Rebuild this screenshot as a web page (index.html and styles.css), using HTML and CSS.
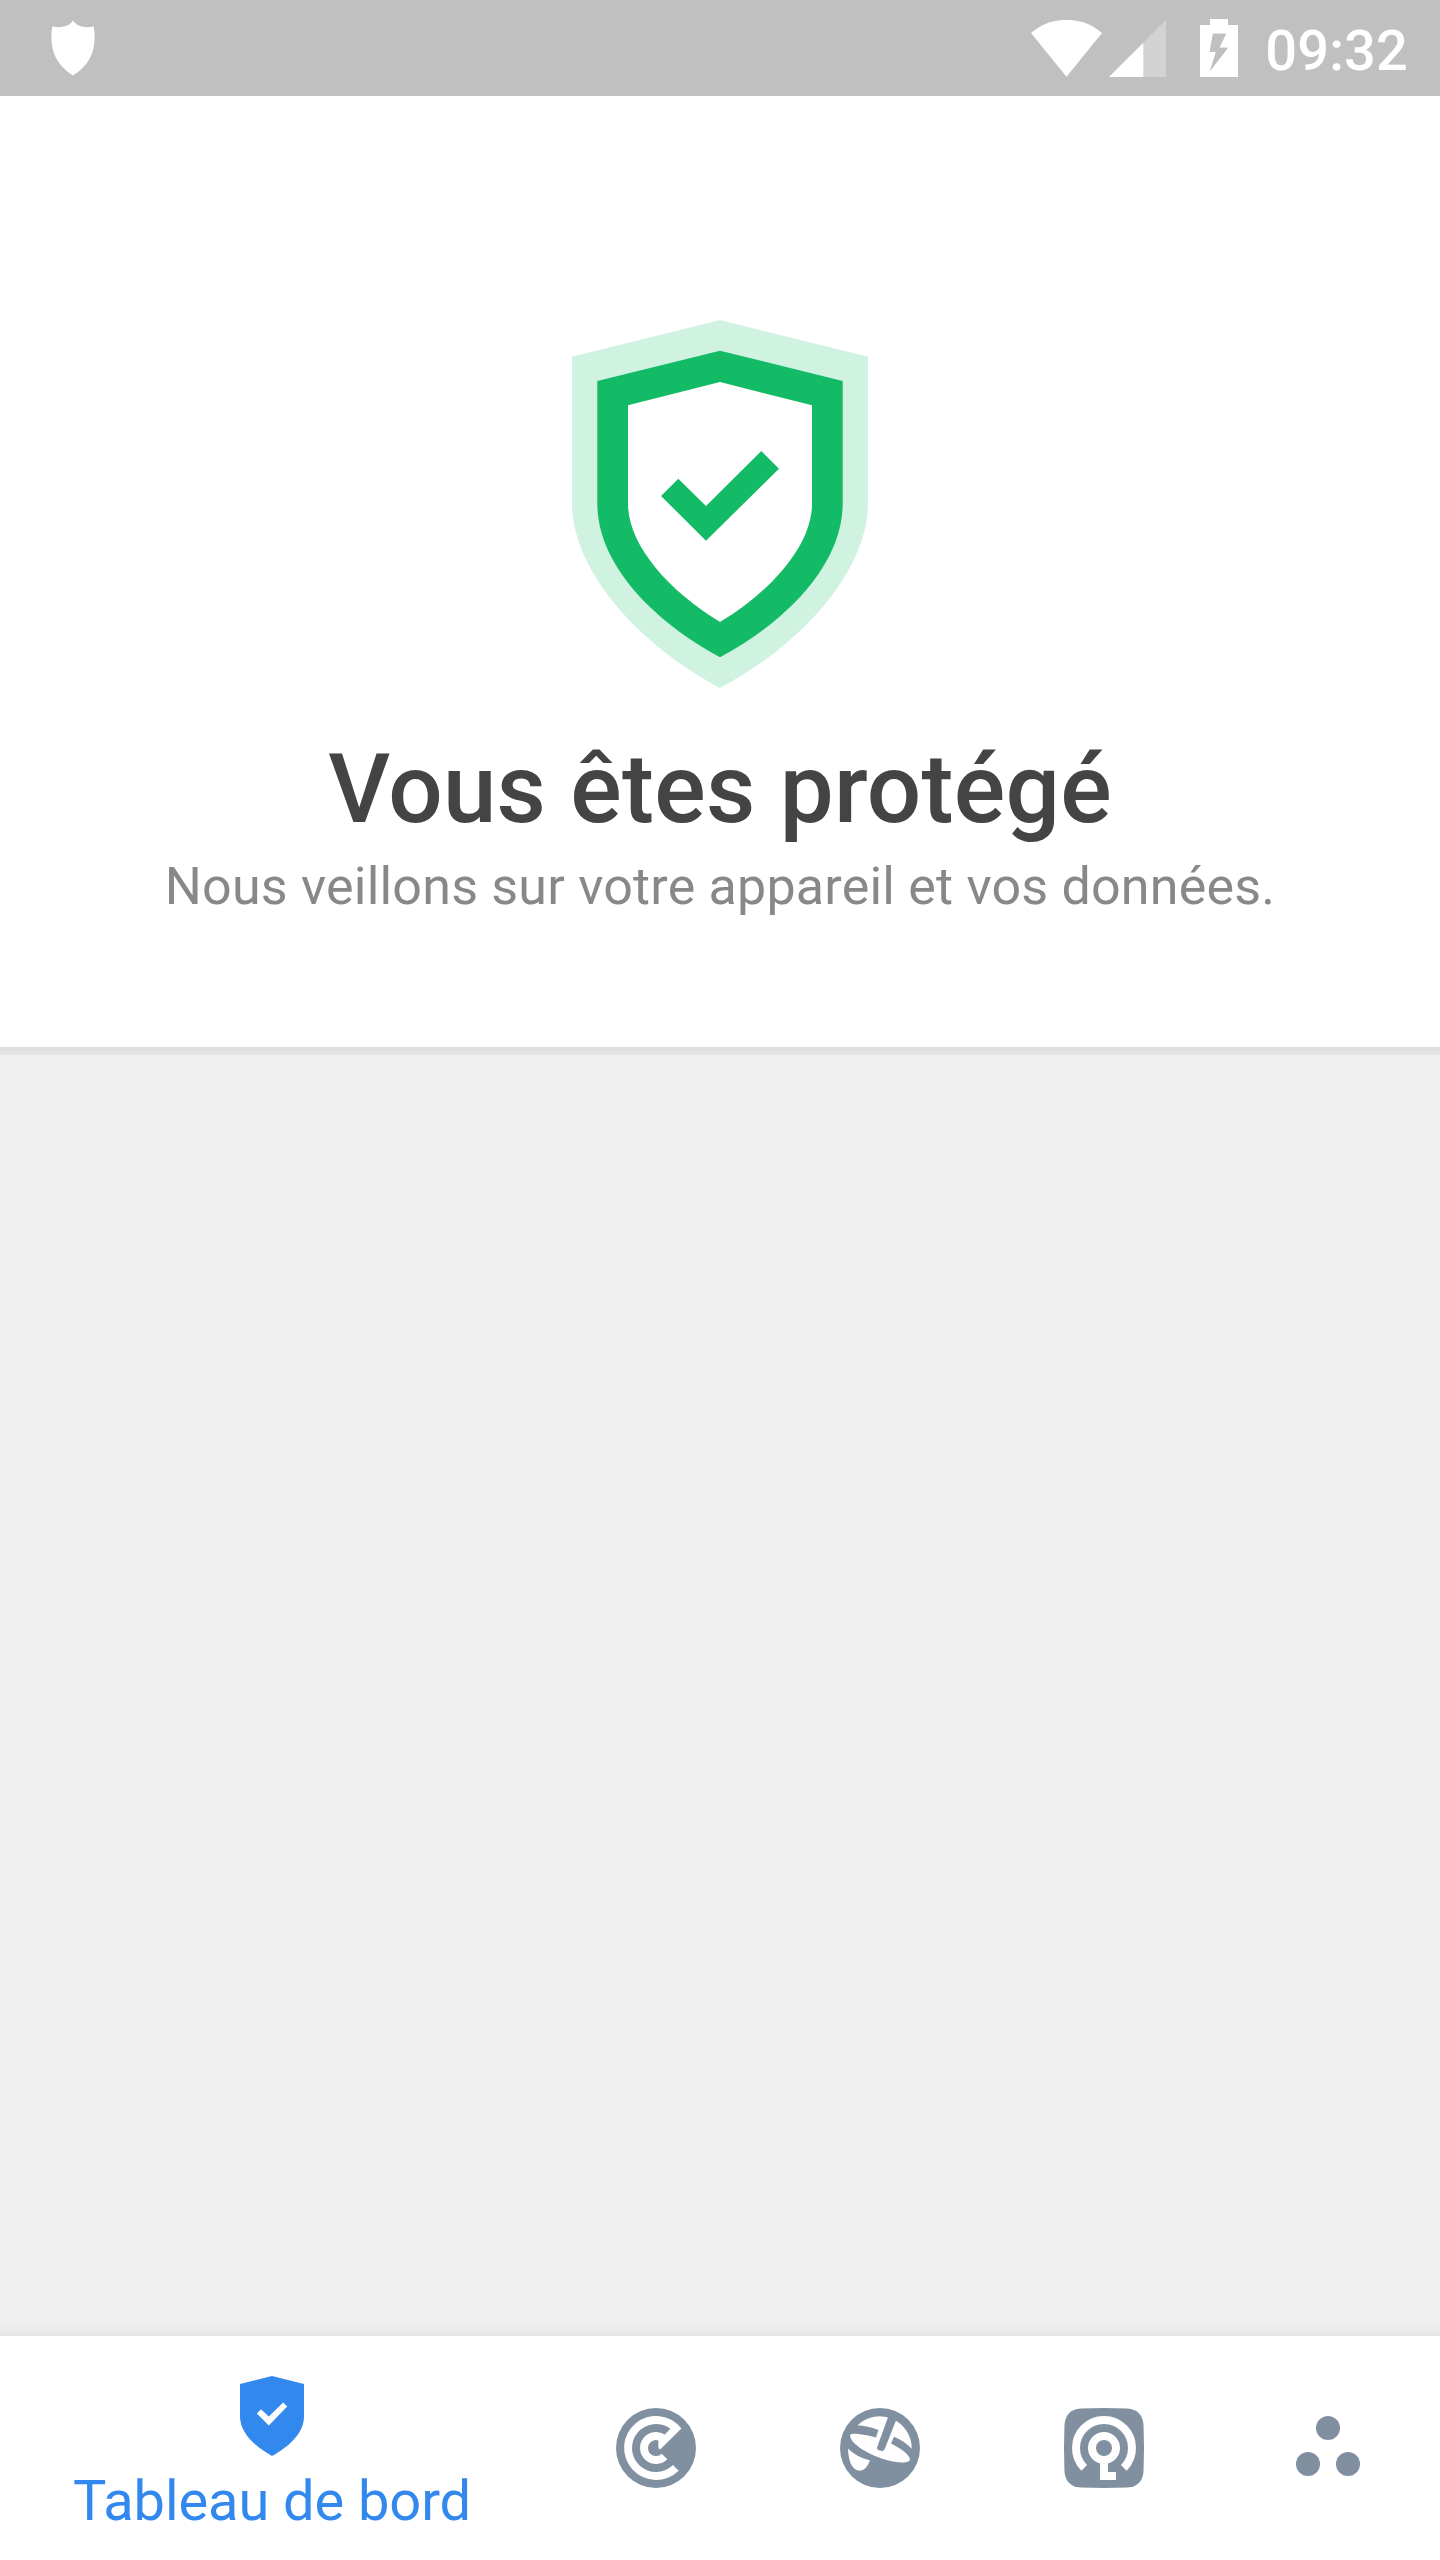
FILE: index.html
```html
<!DOCTYPE html>
<html lang="fr">
<head>
<meta charset="utf-8">
<title>Tableau de bord</title>
<link rel="stylesheet" href="styles.css">
</head>
<body>
<div class="screen">
  <header class="status-bar">
    <svg class="status-shield" width="44" height="56" viewBox="0 0 44 56"><path d="M22 .6C25.500 5.500 31 8.500 42.800 6.500C45.800 27 41 43.500 22 55.400C3 43.500-1.800 27 1.200 6.500C13 8.500 18.500 5.500 22 .6Z"/></svg>
    <div class="status-icons">
      <svg class="wifi" width="71" height="57" viewBox="0 0 71 57"><path d="M0 13C20-4.500 51-4.500 71 13L35.500 56.700Z"/></svg>
      <svg class="signal" width="57" height="57" viewBox="0 0 57 57"><path class="faint" d="M57 0V57H0Z"/><path d="M34.300 22.700V57H0Z"/></svg>
      <svg class="battery" width="38" height="58" viewBox="0 0 38 58"><path fill-rule="evenodd" d="M10 0H28V6H38V58H0V6H10ZM13 14.700L9.700 32.700H16L10 52L28 28.700H19.300L26 14.700Z"/><path class="bolt" d="M13 14.700L9.700 32.700H16L10 52L28 28.700H19.300L26 14.700Z"/></svg>
      <span class="clock">09:32</span>
    </div>
  </header>
  <section class="hero">
    <svg class="hero-shield" width="296" height="368" viewBox="0 0 296 368">
      <path class="halo" d="M148 0L296 36.700V183C296 248 234 322 148 368C62 322 0 248 0 183V36.700Z"/>
      <path class="ring" d="M148 30.700L270.700 61V183.500C270.700 243 217 300 148 337.300C79 300 25.300 243 25.300 183.500V61Z"/>
      <path class="core" d="M148 62L240 85.300V184C240 224 201 270 148 302C95 270 56 224 56 184V85.300Z"/>
      <path class="ring" d="M89 176L106.300 158.700L134 186L189.300 131L207 148.700L134 220.700Z"/>
    </svg>
    <h1 class="title">Vous êtes protégé</h1>
    <p class="subtitle">Nous veillons sur votre appareil et vos données.</p>
  </section>
  <main class="content"></main>
  <nav class="tabs">
    <a class="tab active">
      <svg class="tab-icon" viewBox="0 0 24 24"><path d="M12 2L20 4V12C20 16.300 16.300 19.600 12 22C7.700 19.600 4 16.300 4 12V4Z"/><path class="cut" d="M8.200 11.350L9.250 10.300L11.200 12.150L14.800 8.600L15.800 9.650L11.200 14.400Z"/></svg>
      <span class="tab-label">Tableau de bord</span>
    </a>
    <a class="tab">
      <svg class="tab-icon" viewBox="0 0 24 24"><circle cx="12" cy="12" r="10"/><path class="cut" d="M17.660 17.660A8 8 0 1 1 18.350 7.100L13.300 12.150Q12.600 12.600 12.600 11.700V10.100A2 2 0 1 0 13.410 13.410L14.830 14.830A4 4 0 1 1 14.200 8.650L15.600 7.200A6 6 0 1 0 16.240 16.240Z"/></svg>
    </a>
    <a class="tab">
      <svg class="tab-icon" viewBox="0 0 24 24"><circle cx="12" cy="12" r="10"/><path class="cut" d="M6.400 6.300A8 8 0 0 1 19.930 12.200Q18 10.200 15.500 9.200L14.750 10.900Q19.200 13.200 19.500 14.800C19.400 16 16 15.800 12.400 14.600C8.500 13.200 4.600 10.900 4.500 8.800Q5 7.900 11 9.400L11.600 7.500Q8.800 6.400 6.400 6.300ZM4 12.100Q6 14.200 9.500 15.100Q8.500 17.600 7 17.700Q4.200 17.500 4 12.100Z"/><path d="M14.400 3.200L11.350 11.650Q11.100 12.350 11.650 12.550L12.500 12.750Q12.950 12.800 13.200 12.200L16.500 3.900Z"/></svg>
    </a>
    <a class="tab">
      <svg class="tab-icon" viewBox="0 0 24 24"><path d="M6.200 2.120Q12 1.880 17.800 2.120Q21.600 2.400 21.880 6.200Q22.120 12 21.880 17.800Q21.600 21.600 17.800 21.880Q12 22.120 6.200 21.880Q2.400 21.600 2.120 17.800Q1.880 12 2.120 6.200Q2.400 2.400 6.200 2.120Z"/><path class="cut-line" d="M7.050 16.950A7 7 0 1 1 16.950 16.950"/><circle class="cut-line" cx="12" cy="12" r="3"/><path class="cut" d="M11 15H13V18H15V20H11Z"/></svg>
    </a>
    <a class="tab">
      <svg class="tab-icon" viewBox="0 0 24 24"><circle cx="12" cy="7" r="3"/><circle cx="7" cy="16" r="3"/><circle cx="17" cy="16" r="3"/></svg>
    </a>
  </nav>
</div>
</body>
</html>
```
FILE: styles.css
```css
* { box-sizing: border-box; }
body { margin: 0; font-family: Roboto, sans-serif; background: #f0f0f0; }
svg { display: block; flex: none; }
.screen { width: 1440px; height: 2560px; display: flex; flex-direction: column; }
.status-bar {
  height: 96px; flex: none; background: #c0c0c0; color: #fff; fill: #fff;
  display: flex; align-items: center; justify-content: space-between;
  padding: 0 32px 0 51px;
}
.status-icons { display: flex; align-items: center; }
.signal { margin-left: 7px; }
.battery { margin-left: 34px; }
.faint { fill: #d3d3d3; }
.bolt { fill: #c0c0c0; }
.clock { margin-left: 27px; font-size: 56px; font-weight: 500; line-height: 66px; padding-top: 6px; letter-spacing: .15px; }
.hero {
  height: 951px; flex: none; background: #fff; padding-top: 224px;
  display: flex; flex-direction: column; align-items: center;
  box-shadow: 0 4px 0 #dedede, 0 8px 0 #e3e3e3;
}
.halo { fill: #d0f2e0; }
.ring { fill: #13bb66; }
.core { fill: #fff; }
.title { margin: 45px 0 0; font-size: 96px; font-weight: 500; line-height: 112px; letter-spacing: .25px; color: #444; white-space: nowrap; }
.subtitle { margin: 11px 0 0; font-size: 52px; line-height: 61px; letter-spacing: .21px; color: #888; white-space: nowrap; }
.content { flex: 1; background: linear-gradient(to top, #e4e4e4, #ededed 8px, #f0f0f0) no-repeat bottom / 100% 16px; }
.tabs { height: 224px; flex: none; background: #fff; display: flex; fill: #8190a0; }
.tab { width: 224px; display: flex; flex-direction: column; align-items: center; justify-content: center; }
.tab-icon { width: 96px; height: 96px; }
.tab.active { width: 544px; justify-content: flex-start; padding-top: 32px; fill: #3388ee; color: #3388ee; }
.tab-label { font-size: 56px; line-height: 66px; letter-spacing: -.08px; margin-top: 4px; white-space: nowrap; }
.cut { fill: #fff; }
.cut-line { fill: none; stroke: #fff; stroke-width: 2; }
```
